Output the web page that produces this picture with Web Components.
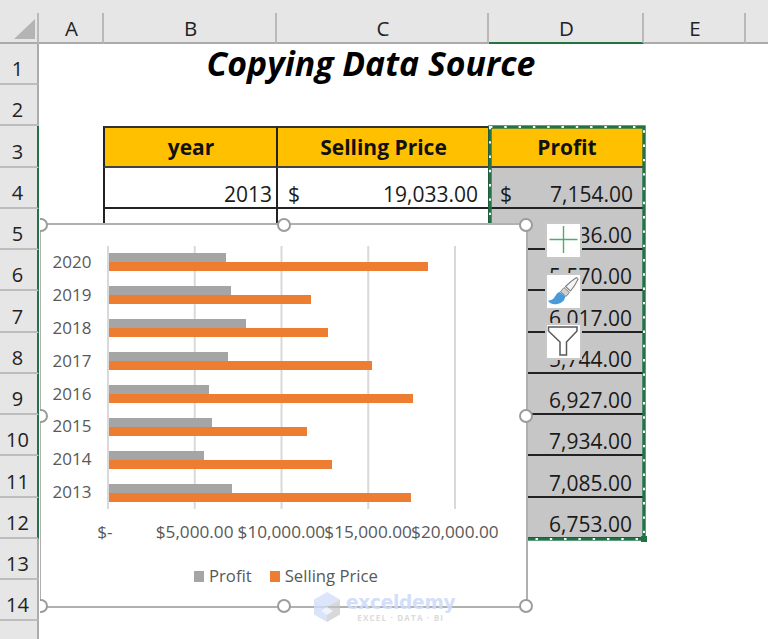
<!DOCTYPE html>
<html><head><meta charset="utf-8"><title>Copying Data Source</title>
<style>html,body{margin:0;padding:0;background:#fff;overflow:hidden}body{font-family:"Open Sans","Noto Sans",sans-serif;color:#111}</style></head>
<body>
<x-sheet>
  <x-selection></x-selection>
  <x-chart></x-chart>
  <x-tools></x-tools>
  <x-watermark></x-watermark>
</x-sheet>
<script>
const def=(name,html,setup)=>customElements.define(name,class extends HTMLElement{
  constructor(){super();this.attachShadow({mode:'open'}).innerHTML=html;}
  connectedCallback(){if(setup&&!this._d){this._d=1;setup(this);}}
});
def('x-colhead',`<style>:host{display:flex;align-items:center;justify-content:center;box-sizing:border-box;background:#e6e6e6;border-bottom:2px solid #ababab;border-right:2px solid #b9b9b9;font-size:20.5px;color:#222;padding:1px 0 0 2px}
:host([sel]){border-bottom-color:#217346}</style><slot></slot>`);
def('x-corner',`<style>:host{display:block;background:#e6e6e6;border-bottom:2px solid #ababab;border-right:2px solid #b9b9b9;box-sizing:border-box}svg{display:block}</style>
<svg width="37" height="29" viewBox="0 0 37 29"><polygon points="35,6 35,26 14,26" fill="#b4b4b4"/></svg>`);
def('x-rowhead',`<style>:host{display:flex;align-items:flex-end;justify-content:center;box-sizing:border-box;background:#e6e6e6;border-bottom:2px solid #bdbdbd;border-right:2px solid #ababab;font-size:20px;color:#222;padding:0 2px 0 0;line-height:29px}
:host([sel]){border-right-color:#217346}:host([last]){border-bottom:0}</style><slot></slot>`);
def('x-cell',`<style>:host{display:flex;align-items:flex-end;justify-content:flex-end;box-sizing:border-box;font-size:21px;line-height:25px;padding:0 5px 0;color:#1a1a1a;min-width:0;white-space:nowrap}
:host([box]){border-bottom:2px solid #222;border-left:2px solid #222;margin-left:-1px}
:host([head]){background:#ffc000;border-top:2px solid #333;border-bottom-color:#444;justify-content:center;font-weight:700;align-items:center;font-size:21px;color:#111;padding:1px 0 0}
:host([title]){justify-content:center;align-items:center;font-size:33.8px;font-weight:700;font-style:italic;color:#000;overflow:visible;padding:0 6px 2px 0}
:host([gray]){background:#c6c6c6}
:host([acct]){justify-content:space-between;padding-left:10px;padding-right:11px}
:host([num]){padding-right:12px}</style><slot name="sym"></slot><slot></slot>`);
def('x-sheet',`<style>:host{display:block;position:relative;width:768px;height:639px;overflow:hidden}
.g{display:grid;grid-template-columns:39px 65px 173px 212px 155px 102px 22px;grid-template-rows:13px 31px 41px 41px 42px 41px 41px 41px 42px 41px 41px 41px 42px 41px 41px 41px 18px}
.top{grid-column:1/-1;background:#e6e6e6}</style><div class="g" id="g"><div class="top"></div></div><slot></slot>`,el=>{
  const g=el.shadowRoot.getElementById('g');
  const mk=(tag,attrs,txt,style)=>{const e=document.createElement(tag);for(const a of attrs||[])e.setAttribute(a,'');if(txt)e.textContent=txt;if(style)e.style.cssText=style;g.appendChild(e);return e;};
  mk('x-corner');
  ['A','B','C','D','E'].forEach(c=>mk('x-colhead',c=='D'?['sel']:[],c));
  mk('x-colhead',[],'','border-right:0');
  const dvals=[null,null,null,'7,154.00','5,536.00','5,570.00','6,017.00','5,744.00','6,927.00','7,934.00','7,085.00','6,753.00'];
  for(let r=1;r<=15;r++){
    const sel=r>=3&&r<=12;
    const a=[];if(sel)a.push('sel');if(r==15)a.push('last');
    mk('x-rowhead',a,r<15?String(r):'');
    mk('x-cell');
    if(r==1){mk('x-cell',['title'],'Copying Data Source','grid-column:span 3');}
    else if(r==3){mk('x-cell',['box','head'],'year');mk('x-cell',['box','head'],'Selling Price');mk('x-cell',['box','head'],'Profit');}
    else if(r==4){
      mk('x-cell',['box'],'2013');
      const c=mk('x-cell',['box','acct']);c.innerHTML='<span slot="sym">$</span>19,033.00';
      const d=mk('x-cell',['box','acct','gray']);d.innerHTML='<span slot="sym">$</span>7,154.00';
    }
    else if(r>=5&&r<=12){
      mk('x-cell',['box']);mk('x-cell',['box']);
      mk('x-cell',['box','gray','num'],dvals[r-1]);
    }
    else{mk('x-cell');mk('x-cell');mk('x-cell');}
    mk('x-cell');mk('x-cell');
  }
});
def('x-selection',`<style>:host{position:absolute;left:488px;top:125px;width:158px;height:416px;display:block}svg{display:block;overflow:visible}</style>
<svg width="158" height="416" viewBox="0 0 158 416"><rect x="2" y="2" width="154" height="412" fill="none" stroke="#217346" stroke-width="3.4"/>
<rect x="2" y="2" width="154" height="412" fill="none" stroke="#fff" stroke-width="2" stroke-dasharray="2.4 11.9"/>
<rect x="153" y="411" width="6" height="6" fill="#217346"/></svg>`);
def('x-handle',`<style>:host{position:absolute;box-sizing:border-box;width:14px;height:14px;margin:-7px 0 0 -7px;border:2.5px solid #9c9c9c;border-radius:50%;background:#fff;display:block}</style>`);
def('x-bar',`<style>:host{display:block;height:9px;flex:none}</style>`);
def('x-chart',`<style>:host{position:absolute;left:40px;top:0;width:728px;height:639px;overflow:hidden;display:block;font-size:17px;color:#595959}
.box{box-sizing:border-box;position:relative;margin-top:223px;margin-left:-1px;width:489px;height:385px;background:#fff;border:2px solid #b0b0b0;display:grid;grid-template-columns:66px 349px;grid-template-rows:21px 263px 24px auto;}
.years{grid-column:1;grid-row:2;display:flex;flex-direction:column;align-items:flex-end;padding-right:15.5px}
.years div{height:32.9px;line-height:31px}
.plot{grid-column:2;grid-row:2;display:flex;flex-direction:column;background:linear-gradient(90deg,#d9d9d9 1.5px,transparent 1.5px) 0 0/86.75px 100% repeat-x}
.cat{height:32.9px;display:flex;flex-direction:column;justify-content:center;padding-left:1.5px;box-sizing:border-box}
.axis{grid-column:1/-1;grid-row:3/5;display:flex;padding-left:23.5px;height:32px;font-size:17.2px;margin-top:11px;line-height:24px}
.axis div{flex:none;width:86.75px;display:flex;justify-content:center;white-space:nowrap}
.legend{position:absolute;left:0;right:0;top:338px;display:flex;align-items:center;padding-left:153px;gap:5px;font-size:16.7px;line-height:26px}
.k{width:10px;height:11px;flex:none}.l{margin-right:13px}</style>
<div class="box" id="b"><div class="years" id="y"></div><div class="plot" id="p"></div>
<div class="axis"><div style="padding-right:6px;box-sizing:border-box">$-</div><div>$5,000.00</div><div>$10,000.00</div><div>$15,000.00</div><div>$20,000.00</div></div>
<div class="legend"><span class="k" style="background:#a5a5a5"></span><span class="l">Profit</span><span class="k" style="background:#ed7d31"></span><span>Selling Price</span></div>
</div>`,el=>{
  const s=el.shadowRoot,y=s.getElementById('y'),p=s.getElementById('p'),b=s.getElementById('b');
  const data=[[2020,226,428],[2019,231,311],[2018,246,328],[2017,228.5,372],[2016,209,413],[2015,212.5,307],[2014,204.5,332],[2013,232.5,411]];
  for(const [yr,g,o] of data){
    const d=document.createElement('div');d.textContent=yr;y.appendChild(d);
    const c=document.createElement('div');c.className='cat';
    c.innerHTML=`<x-bar style="width:${g-109}px;background:#a5a5a5"></x-bar><x-bar style="width:${o-109}px;background:#ed7d31"></x-bar>`;
    p.appendChild(c);
  }
  for(const [l,t] of [[0,0],[50,0],[100,0],[0,50],[100,50],[0,100],[50,100],[100,100]]){
    const h=document.createElement('x-handle');h.style.left=l+'%';h.style.top=t+'%';b.appendChild(h);
  }
});
def('x-tool',`<style>:host{display:block;box-sizing:border-box;width:37px;height:37px;background:#fff;border:2px solid #c8c8c8}</style><slot></slot>`);
def('x-tools',`<style>:host{position:absolute;left:545px;top:222px;display:flex;flex-direction:column;gap:13.5px}svg{display:block}</style>
<x-tool><svg width="33" height="33" viewBox="0 0 33 33" style="display:block"><path d="M2.5 15.5H30.5M16.5 2V29" stroke="#4cae6b" stroke-width="1.4" fill="none"/></svg></x-tool>
<x-tool><svg width="33" height="33" viewBox="0 0 33 33" style="display:block"><path d="M29.5 2.5L31 4.2C29 8.5 26.5 12.5 23.5 16L18.5 11.5C22 8 25.5 5 29.5 2.5Z" fill="#f6f6f6" stroke="#808080" stroke-width="1.1" stroke-linejoin="round"/><path d="M17 12.5L22.5 17.5L19 21.5L13.5 16.5Z" fill="#d0d0d0" stroke="#808080" stroke-width="1"/><path d="M13 17C9.5 17.5 9 20.5 7 23C5.5 25 2.5 25.5 1 25.5C2 28.5 6.5 30 10.5 29C15 28 18.5 25 18 21Z" fill="#4a9ad9"/></svg></x-tool>
<x-tool><svg width="33" height="33" viewBox="0 0 33 33" style="display:block"><path d="M1.5 2H30V6L19.5 17V30H13V17L1.5 6Z" fill="#fff" stroke="#595959" stroke-width="1.5"/></svg></x-tool>`);
def('x-watermark',`<style>:host{position:absolute;left:313px;top:591px;display:flex;gap:5px;opacity:.9}
svg{display:block}.t{display:flex;flex-direction:column;align-items:center;padding-top:2px;font-family:"DejaVu Sans",sans-serif}
.a{font-size:18.6px;font-weight:700;color:#cfdcf9;line-height:20px;letter-spacing:-.3px}.b{font-size:8px;color:#d8d8d8;letter-spacing:1.2px;line-height:9px;font-weight:700;font-family:"Open Sans",sans-serif}</style>
<svg width="28" height="32" viewBox="0 0 28 32"><polygon points="14,1 27,8.5 14,16 1,8.5" fill="#d6e0fb" opacity=".9"/><polygon points="1,8.5 14,16 14,31 1,23.5" fill="#d2ddfa" opacity=".9"/><polygon points="27,8.5 14,16 14,31 27,23.5" fill="#c6c6c6" opacity=".75"/><polygon points="8,20 14,16 20,20 14,24" fill="#eef2fd"/></svg>
<div class="t"><div class="a">exceldemy</div><div class="b">EXCEL · DATA · BI</div></div>`);
</script>
</body></html>
